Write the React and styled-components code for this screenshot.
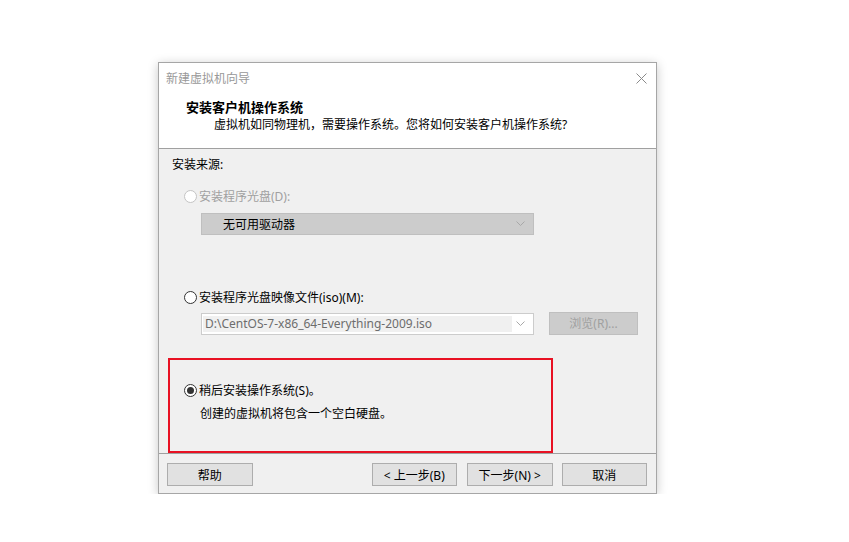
import React from "react";
import styled, { createGlobalStyle } from "styled-components";

const GlobalStyle = createGlobalStyle`
  html, body {
    margin: 0;
    padding: 0;
    background: #ffffff;
  }
  body {
    font-family: "Noto Sans", "Noto Sans CJK SC", sans-serif;
    font-size: 12px;
    color: #000;
  }
`;

const Page = styled.div`
  padding: 62px 0 0 158px;
`;

const Dialog = styled.div`
  width: 497px;
  height: 430px;
  border: 1px solid #a6a6a6;
  box-shadow: 0 2px 10px rgba(0, 0, 0, 0.22);
  display: flex;
  flex-direction: column;
  background: #f0f0f0;
`;

const TitleBar = styled.div`
  height: 30px;
  background: #fff;
  display: flex;
  align-items: center;
  justify-content: space-between;
  padding: 0 9px 0 7px;
  color: #999;
  font-size: 12px;
`;

const CloseIcon = () => (
  <svg width="11" height="11" viewBox="0 0 11 11">
    <path d="M0.5 0.5 L10.5 10.5 M10.5 0.5 L0.5 10.5" stroke="#8a8a8a" strokeWidth="1" fill="none" />
  </svg>
);

const Header = styled.div`
  background: #fff;
  height: 56px;
  border-bottom: 1px solid #a0a0a0;
  padding-top: 6px;
  box-sizing: border-box;
`;

const Heading = styled.div`
  font-weight: bold;
  font-size: 13px;
  line-height: 17px;
  padding-left: 27px;
`;

const SubHeading = styled.div`
  font-size: 12px;
  line-height: 16px;
  margin-top: 1px;
  padding-left: 55px;
`;

const Body = styled.div`
  flex: 1;
  padding: 8px 0 0 0;
  display: flex;
  flex-direction: column;
`;

const SectionLabel = styled.div`
  line-height: 16px;
  padding-left: 13px;
`;

const RadioRow = styled.label`
  display: flex;
  align-items: center;
  height: 16px;
  padding-left: ${(p) => p.$indent}px;
  margin-top: ${(p) => p.$top}px;
  color: ${(p) => (p.$disabled ? "#a0a0a0" : "#000")};
`;

const RadioCircle = styled.span`
  width: 11px;
  height: 11px;
  border-radius: 50%;
  border: 1px solid ${(p) => (p.$disabled ? "#c4c4c4" : "#333")};
  background: #fff;
  margin-right: 2px;
  display: flex;
  align-items: center;
  justify-content: center;
  &::after {
    content: "";
    width: 7px;
    height: 7px;
    border-radius: 50%;
    background: #333;
    display: ${(p) => (p.$checked ? "block" : "none")};
  }
`;

const FieldRow = styled.div`
  display: flex;
  align-items: center;
  padding-left: 42px;
  margin-top: ${(p) => p.$top}px;
  height: 23px;
`;

const Select = styled.div`
  width: 333px;
  height: 22px;
  box-sizing: border-box;
  border: 1px solid ${(p) => (p.$disabled ? "#bfbfbf" : "#cccccc")};
  background: ${(p) => (p.$disabled ? "#cccccc" : "#ffffff")};
  display: flex;
  align-items: center;
  padding: 2px 8px 2px ${(p) => (p.$disabled ? "21px" : "1px")};
`;

const SelectText = styled.span`
  flex: ${(p) => (p.$fill ? "0 0 309px" : "1")};
  height: 100%;
  display: flex;
  align-items: center;
  background: ${(p) => (p.$fill ? "#f0f0f0" : "transparent")};
  color: ${(p) => (p.$fill ? "#6d6d6d" : "#000")};
  padding-left: ${(p) => (p.$fill ? "2px" : "0")};
  box-sizing: border-box;
  margin-right: auto;
`;

const Chevron = () => (
  <svg width="9" height="5" viewBox="0 0 9 5">
    <polyline points="0.5,0.5 4.5,4.5 8.5,0.5" stroke="#a8a8a8" strokeWidth="1" fill="none" />
  </svg>
);

const BrowseButton = styled.div`
  width: 89px;
  height: 23px;
  box-sizing: border-box;
  margin-left: 15px;
  margin-top: -1px;
  border: 1px solid #bfbfbf;
  background: #cccccc;
  color: #a0a0a0;
  display: flex;
  align-items: center;
  justify-content: center;
`;

const Highlight = styled.div`
  margin: 23px 0 0 9px;
  width: 385px;
  height: 95px;
  box-sizing: border-box;
  border: 2px solid #e81123;
  padding-top: 22px;
`;

const Note = styled.div`
  line-height: 16px;
  padding-left: 30px;
  margin-top: 8px;
`;

const Footer = styled.div`
  height: 40px;
  border-top: 1px solid #a0a0a0;
  display: flex;
  align-items: flex-start;
  padding: 9px 9px 0 8px;
  box-sizing: border-box;
`;

const Button = styled.div`
  width: 86px;
  height: 23px;
  box-sizing: border-box;
  border: 1px solid #adadad;
  background: #e1e1e1;
  display: flex;
  align-items: center;
  justify-content: center;
  margin-left: ${(p) => p.$gap || 0}px;
`;

export default function App() {
  return (
    <>
      <GlobalStyle />
      <Page>
        <Dialog>
          <TitleBar>
            <span>新建虚拟机向导</span>
            <CloseIcon />
          </TitleBar>
          <Header>
            <Heading>安装客户机操作系统</Heading>
            <SubHeading>虚拟机如同物理机，需要操作系统。您将如何安装客户机操作系统?</SubHeading>
          </Header>
          <Body>
            <SectionLabel>安装来源:</SectionLabel>
            <RadioRow $indent={25} $top={15} $disabled>
              <RadioCircle $disabled />
              安装程序光盘(D):
            </RadioRow>
            <FieldRow $top={8}>
              <Select $disabled>
                <SelectText>无可用驱动器</SelectText>
                <Chevron />
              </Select>
            </FieldRow>
            <RadioRow $indent={25} $top={54}>
              <RadioCircle />
              安装程序光盘映像文件(iso)(M):
            </RadioRow>
            <FieldRow $top={7}>
              <Select>
                <SelectText $fill>D:\CentOS-7-x86_64-Everything-2009.iso</SelectText>
                <Chevron />
              </Select>
              <BrowseButton>浏览(R)...</BrowseButton>
            </FieldRow>
            <Highlight>
              <RadioRow $indent={14} $top={0}>
                <RadioCircle $checked />
                稍后安装操作系统(S)。
              </RadioRow>
              <Note>创建的虚拟机将包含一个空白硬盘。</Note>
            </Highlight>
          </Body>
          <Footer>
            <Button>帮助</Button>
            <Button $gap={119}>&lt; 上一步(B)</Button>
            <Button $gap={10}>下一步(N) &gt;</Button>
            <Button $gap={9}>取消</Button>
          </Footer>
        </Dialog>
      </Page>
    </>
  );
}
